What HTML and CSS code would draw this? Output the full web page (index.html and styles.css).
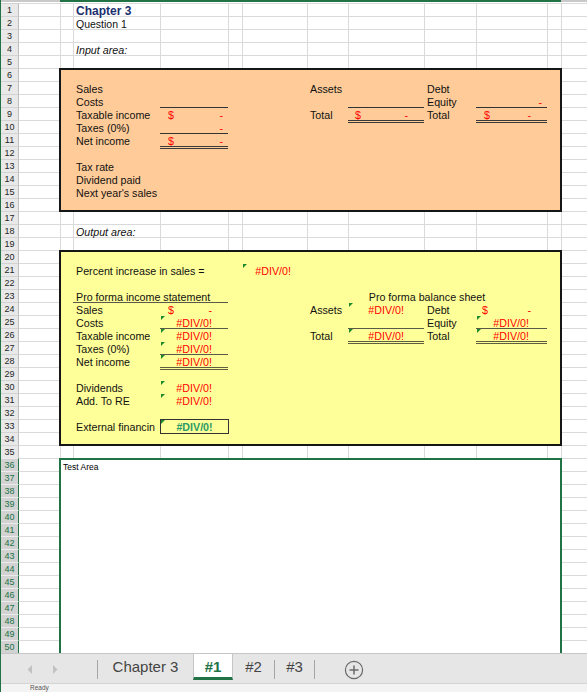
FILE: index.html
```html
<!DOCTYPE html>
<html>
<head>
<meta charset="utf-8">
<title>Chapter 3 - #1</title>
<link rel="stylesheet" href="styles.css">
</head>
<body>
<div class="app">
  <div class="sheet">
    <div class="top"></div>
    <div class="topsel"></div>
    <div class="rowheads">
      <div class="rh">1</div><div class="rh">2</div><div class="rh">3</div><div class="rh">4</div><div class="rh">5</div>
      <div class="rh">6</div><div class="rh">7</div><div class="rh">8</div><div class="rh">9</div><div class="rh">10</div>
      <div class="rh">11</div><div class="rh">12</div><div class="rh">13</div><div class="rh">14</div><div class="rh">15</div>
      <div class="rh">16</div><div class="rh">17</div><div class="rh">18</div><div class="rh">19</div><div class="rh">20</div>
      <div class="rh">21</div><div class="rh">22</div><div class="rh">23</div><div class="rh">24</div><div class="rh">25</div>
      <div class="rh">26</div><div class="rh">27</div><div class="rh">28</div><div class="rh">29</div><div class="rh">30</div>
      <div class="rh">31</div><div class="rh">32</div><div class="rh">33</div><div class="rh">34</div><div class="rh">35</div>
      <div class="rh sel">36</div><div class="rh sel">37</div><div class="rh sel">38</div><div class="rh sel">39</div><div class="rh sel">40</div>
      <div class="rh sel">41</div><div class="rh sel">42</div><div class="rh sel">43</div><div class="rh sel">44</div><div class="rh sel">45</div>
      <div class="rh sel">46</div><div class="rh sel">47</div><div class="rh sel">48</div><div class="rh sel">49</div><div class="rh sel">50</div>
    </div>

    <div class="vl cB"></div><div class="vl cC"></div><div class="vl cD"></div><div class="vl cE"></div>
    <div class="vl cF"></div><div class="vl cG"></div><div class="vl cH"></div><div class="vl cI"></div>
    <div class="vl cJ"></div><div class="vl cK"></div><div class="vl cL"></div>

    <div class="box peach"></div>
    <div class="box yellow"></div>
    <div class="textarea"><div class="ta-label">Test Area</div></div>

    <!-- header text -->
    <div class="c r1 cC title">Chapter 3</div>
    <div class="c r2 cC q">Question 1</div>
    <div class="c r4 cC it">Input area:</div>

    <!-- input area -->
    <div class="c r7 cC">Sales</div>
    <div class="c r7 cG">Assets</div>
    <div class="c r7 cI">Debt</div>

    <div class="c r8 cC">Costs</div>
    <div class="c r8 cD bb"></div>
    <div class="c r8 cH bb"></div>
    <div class="c r8 cI">Equity</div>
    <div class="c r8 cJ bb red right pr5">-</div>

    <div class="c r9 cC">Taxable income</div>
    <div class="c r9 cD acct red pl8 pr5"><span>$</span><span>-</span></div>
    <div class="c r9 cG">Total</div>
    <div class="c r9 cH acct red pl7 pr16 bb2"><span>$</span><span>-</span></div>
    <div class="c r9 cI">Total</div>
    <div class="c r9 cJ acct red pl8 pr16 bb2"><span>$</span><span>-</span></div>

    <div class="c r10 cC">Taxes (0%)</div>
    <div class="c r10 cD red right pr5 bb">-</div>

    <div class="c r11 cC">Net income</div>
    <div class="c r11 cD acct red pl8 pr5 bb2"><span>$</span><span>-</span></div>

    <div class="c r13 cC">Tax rate</div>
    <div class="c r14 cC">Dividend paid</div>
    <div class="c r15 cC">Next year's sales</div>

    <div class="c r18 cC it">Output area:</div>

    <!-- output area -->
    <div class="c r21 cC">Percent increase in sales =</div>
    <div class="c r21 cF t red right pr16">#DIV/0!</div>

    <div class="c r23 sCD bbY">Pro forma income statement</div>
    <div class="c r23 sGJ center">Pro forma balance sheet</div>

    <div class="c r24 cC">Sales</div>
    <div class="c r24 cD acct red pl8 pr16"><span>$</span><span>-</span></div>
    <div class="c r24 cG">Assets</div>
    <div class="c r24 cH t red right pr20">#DIV/0!</div>
    <div class="c r24 cI">Debt</div>
    <div class="c r24 cJ acct red pl6 pr16"><span>$</span><span>-</span></div>

    <div class="c r25 cC">Costs</div>
    <div class="c r25 cD t red right pr16 bbY">#DIV/0!</div>
    <div class="c r25 cH bbY"></div>
    <div class="c r25 cI">Equity</div>
    <div class="c r25 cJ t red right pr18 bbY">#DIV/0!</div>

    <div class="c r26 cC">Taxable income</div>
    <div class="c r26 cD t red right pr16">#DIV/0!</div>
    <div class="c r26 cG">Total</div>
    <div class="c r26 cH t red right pr20 bb2Y">#DIV/0!</div>
    <div class="c r26 cI">Total</div>
    <div class="c r26 cJ t red right pr18 bb2Y">#DIV/0!</div>

    <div class="c r27 cC">Taxes (0%)</div>
    <div class="c r27 cD t red right pr16 bbY">#DIV/0!</div>

    <div class="c r28 cC">Net income</div>
    <div class="c r28 cD t red right pr16 bb2Y">#DIV/0!</div>

    <div class="c r30 cC">Dividends</div>
    <div class="c r30 cD t red right pr16">#DIV/0!</div>

    <div class="c r31 cC">Add. To RE</div>
    <div class="c r31 cD t red right pr16">#DIV/0!</div>

    <div class="c r33 cC clip">External financin</div>
    <div class="c r33 cD t boxed">#DIV/0!</div>
  </div>

  <div class="tabbar">
    <div class="nav">
      <svg width="96" height="29" viewBox="0 0 96 29">
        <polygon points="31,11 26.5,15.5 31,20" fill="#c2c2c2"/>
        <polygon points="52,11 56.5,15.5 52,20" fill="#c2c2c2"/>
      </svg>
    </div>
    <div class="sep"></div>
    <div class="tab w95">Chapter 3</div>
    <div class="tab active">#1</div>
    <div class="tab w41">#2</div>
    <div class="sep"></div>
    <div class="tab w39">#3</div>
    <div class="sep"></div>
    <div class="add">
      <svg width="20" height="20" viewBox="0 0 20 20">
        <circle cx="10" cy="10" r="8.6" fill="none" stroke="#6a6a6a" stroke-width="1.2"/>
        <line x1="10" y1="5.5" x2="10" y2="14.5" stroke="#6a6a6a" stroke-width="1.5"/>
        <line x1="5.5" y1="10" x2="14.5" y2="10" stroke="#6a6a6a" stroke-width="1.5"/>
      </svg>
    </div>
  </div>
  <div class="status"><span class="ready">Ready</span></div>
</div>
</body>
</html>
```
FILE: styles.css
```css
html, body {
  margin: 0;
  padding: 0;
  background: #fff;
}
body {
  width: 587px;
  height: 692px;
  overflow: hidden;
  font-family: "Liberation Sans", Arial, sans-serif;
}
.app {
  width: 587px;
  height: 692px;
  box-sizing: border-box;
  border-left: 1px solid #217346;
  display: flex;
  flex-direction: column;
}
.sheet {
  flex: none;
  display: grid;
  grid-template-columns: 18px 41px 13px 87px 68px 14px 65px 41px 76px 52px 71px 14px 26px;
  grid-template-rows: 3px repeat(50, 13px);
  background-image: repeating-linear-gradient(to bottom, #dadada 0, #dadada 1px, #fff 1px, #fff 13px);
  background-position: 0 3px;
}
.top {
  grid-column: 1 / -1;
  grid-row: 1;
  background: #fff;
  border-top: 2px solid #c9c9c9;
}
.topsel {
  grid-column: 3 / 13;
  grid-row: 1;
  align-self: start;
  height: 2px;
  background: #217346;
}
.rowheads {
  grid-column: 1;
  grid-row: 2 / 52;
  display: flex;
  flex-direction: column;
  background: #e9e9e9;
}
.rh {
  height: 13px;
  box-sizing: border-box;
  border-top: 1px solid #d3d3d3;
  border-right: 1px solid #bdbdbd;
  padding-top: 1px;
  font-size: 9px;
  line-height: 11px;
  text-align: center;
  color: #262626;
}
.rh.sel {
  background: #d2d2d2;
  color: #217346;
  border-top-color: #ececec;
  border-right: 1px solid #217346;
}

.vl { grid-row: 2 / 52; border-left: 1px solid #dadada; }
.cA { grid-column: 2; }
.cB { grid-column: 3; }
.cC { grid-column: 4; }
.cD { grid-column: 5; }
.cE { grid-column: 6; }
.cF { grid-column: 7; }
.cG { grid-column: 8; }
.cH { grid-column: 9; }
.cI { grid-column: 10; }
.cJ { grid-column: 11; }
.cK { grid-column: 12; }
.cL { grid-column: 13; }
.sCD { grid-column: 4 / 6; }
.sGJ { grid-column: 8 / 12; }

.r1 { grid-row: 2; }
.r2 { grid-row: 3; }
.r4 { grid-row: 5; }
.r7 { grid-row: 8; }
.r8 { grid-row: 9; }
.r9 { grid-row: 10; }
.r10 { grid-row: 11; }
.r11 { grid-row: 12; }
.r13 { grid-row: 14; }
.r14 { grid-row: 15; }
.r15 { grid-row: 16; }
.r18 { grid-row: 19; }
.r21 { grid-row: 22; }
.r23 { grid-row: 24; }
.r24 { grid-row: 25; }
.r25 { grid-row: 26; }
.r26 { grid-row: 27; }
.r27 { grid-row: 28; }
.r28 { grid-row: 29; }
.r30 { grid-row: 31; }
.r31 { grid-row: 32; }
.r33 { grid-row: 34; }

.box {
  grid-column: 3 / 13;
  margin: 0 -1px -1px -1px;
  border: 2px solid #161616;
  box-sizing: border-box;
}
.peach { grid-row: 7 / 18; background: #ffcc99; }
.yellow { grid-row: 21 / 36; background: #ffff99; }
.textarea {
  grid-column: 3 / 13;
  grid-row: 37 / 52;
  margin: 0 -1px;
  border: 2px solid #217346;
  border-bottom: 0;
  background: #fff;
  box-sizing: border-box;
}
.ta-label {
  padding: 2px 2px 0 2px;
  font-size: 8.5px;
  line-height: 10px;
  color: #000;
}

.c {
  height: 11px;
  padding: 2px 3px 0 3px;
  line-height: 13px;
  font-size: 10.7px;
  color: #111;
  white-space: nowrap;
  position: relative;
  min-width: 0;
}
.title {
  font-size: 12px;
  font-weight: bold;
  color: #1b2f6e;
}
.q { font-size: 10.5px; }
.it { font-style: italic; }
.red { color: #ff0000; }
.right { text-align: right; }
.center { text-align: center; }
.acct { display: flex; justify-content: space-between; }
.pl6 { padding-left: 6px; }
.pl7 { padding-left: 7px; }
.pl8 { padding-left: 8px; }
.pr5 { padding-right: 5px; }
.pr16 { padding-right: 16px; }
.pr18 { padding-right: 18px; }
.pr20 { padding-right: 20px; }
.bb { border-bottom: 1px solid #333; }
.bb2 { border-bottom: 3px double #3a3a3a; }
.bbY { border-bottom: 1px solid #5a5a48; }
.bb2Y { border-bottom: 3px double #5f5f40; }
.clip { overflow: hidden; padding-right: 0; }
.t::before {
  content: "";
  position: absolute;
  left: 1px;
  top: 1px;
  border-top: 4px solid #1c8a2a;
  border-right: 4px solid transparent;
}
.boxed {
  padding-top: 1px;
  box-sizing: border-box;
  height: 15px;
  border: 1px solid #333;
  text-align: center;
  font-weight: bold;
  color: #2e9a68;
  margin-right: -1px;
}
.boxed::before { left: 0; top: 0; }

.tabbar {
  flex: none;
  height: 30px;
  box-sizing: border-box;
  border-top: 1px solid #c6c6c6;
  background: #e6e6e6;
  display: flex;
  align-items: flex-start;
}
.nav { width: 96px; height: 29px; }
.nav svg { display: block; }
.sep {
  width: 1px;
  height: 19px;
  margin-top: 6px;
  background: #a6a6a6;
}
.tab {
  height: 29px;
  box-sizing: border-box;
  padding-top: 4px;
  font-size: 15px;
  line-height: 17px;
  color: #444;
  text-align: center;
}
.w95 { width: 95px; }
.w41 { width: 41px; }
.w39 { width: 39px; }
.tab.active {
  width: 40px;
  height: 26px;
  background: #fff;
  color: #217346;
  font-weight: bold;
  border-left: 1px solid #c6c6c6;
  border-right: 1px solid #c6c6c6;
  border-bottom: 3px solid #217346;
}
.add { margin-left: 29px; margin-top: 6px; }
.add svg { display: block; }
.status {
  flex: 1;
  box-sizing: border-box;
  border-top: 1px solid #d4d4d4;
  background: #f3f3f3;
  overflow: hidden;
  padding-left: 29px;
}
.ready {
  display: block;
  font-size: 6.5px;
  line-height: 8px;
  color: #555;
}
```
